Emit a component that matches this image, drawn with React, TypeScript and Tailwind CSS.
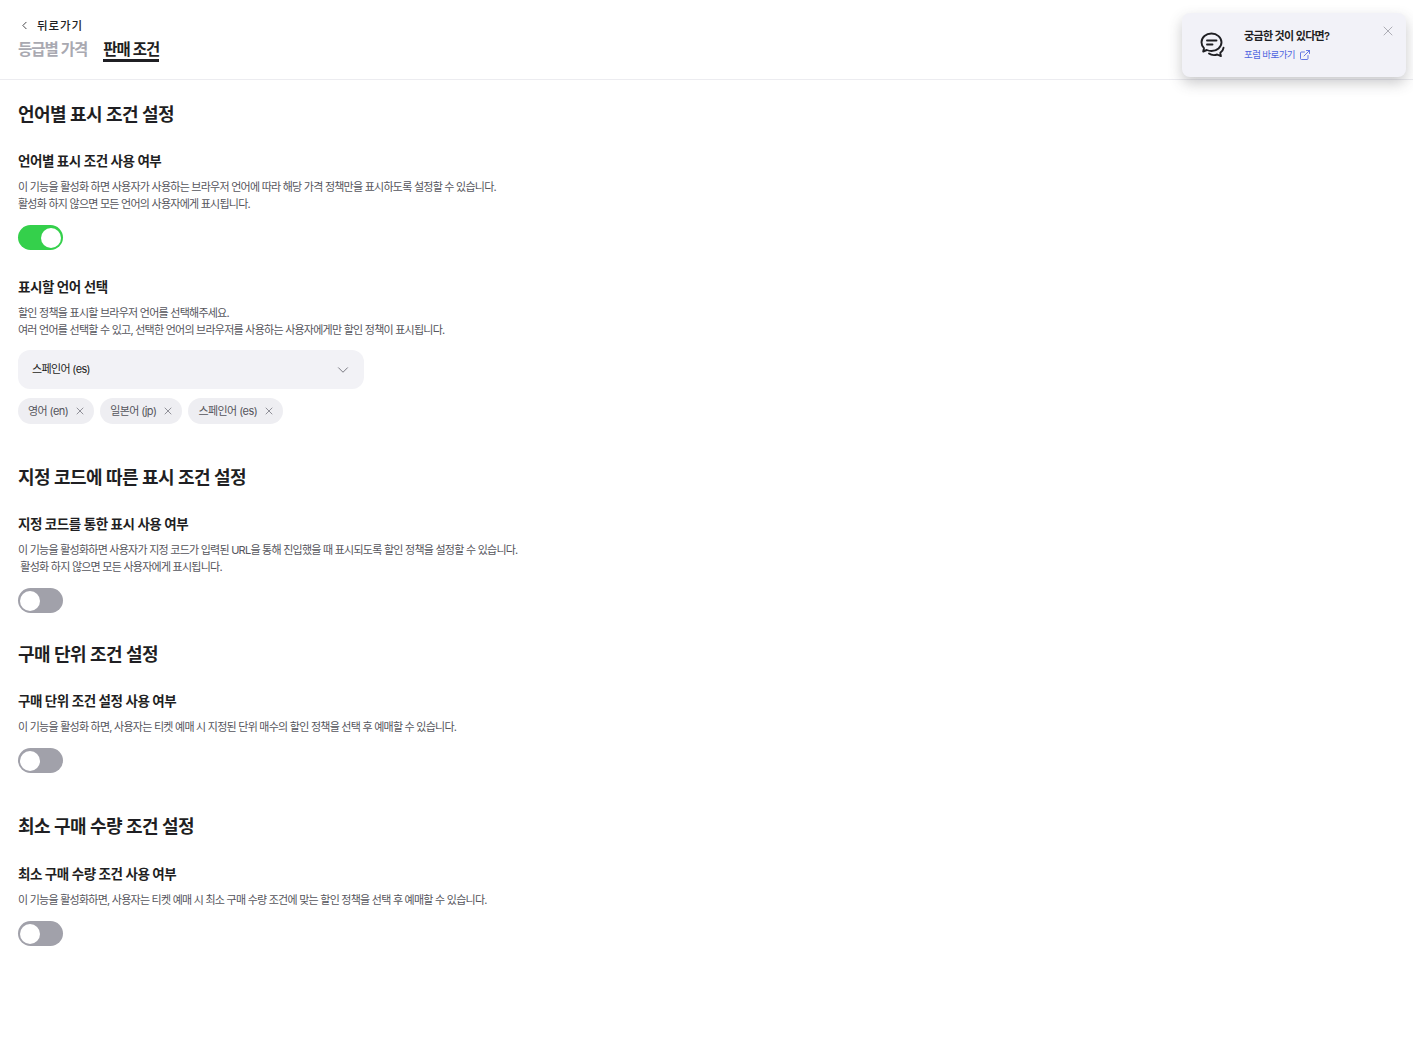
import { ChevronLeft, ChevronDown, X, ExternalLink } from 'lucide-react';

function Toggle({ on }: { on?: boolean }) {
    return (
        <div className={`flex h-[25px] w-[45px] items-center rounded-full px-[2px] ${on ? 'justify-end bg-[#34d04b]' : 'justify-start bg-[#a1a1aa]'}`}>
            <div className="h-[20px] w-[20px] rounded-full bg-white" />
        </div>
    );
}

function Tag({ label }: { label: string }) {
    return (
        <div className="flex h-[26px] items-center gap-[6px] rounded-full bg-[#eeeef2] pl-[10px] pr-[8px] text-[11px] tracking-[-0.58px] text-[#55555c]">
            {label}
            <X size={12} strokeWidth={1.5} className="text-[#70707a]" />
        </div>
    );
}

function Title({ children }: { children: string }) {
    return <h2 className="text-[18px] font-semibold leading-[28px] tracking-[-0.55px] text-[#1f1f23]">{children}</h2>;
}

function Sub({ children }: { children: string }) {
    return <h3 className="text-[13.5px] font-semibold leading-[20px] tracking-[-0.46px] text-[#1f1f23]">{children}</h3>;
}

function Desc({ lines }: { lines: string[] }) {
    return (
        <div className="mt-[8px] whitespace-pre text-[11px] leading-[17px] tracking-[-0.75px] text-[#55555c]">
            {lines.map((l) => (
                <p key={l}>{l}</p>
            ))}
        </div>
    );
}

export default function App() {
    return (
        <div className="relative min-h-[1038px] bg-white font-['Inter','Noto_Sans_CJK_KR',sans-serif]">
            <header className="h-[80px] border-b border-[#ececf0] px-[18px] pt-[17px]">
                <div className="flex h-[16px] items-center gap-[6px] text-[11.5px] font-medium tracking-[0.9px] text-[#1f1f23]">
                    <ChevronLeft size={13} strokeWidth={1.5} />
                    <span className="pt-[3px]">뒤로가기</span>
                </div>
                <div className="mt-[4px] flex gap-[16px] text-[15.5px] font-semibold leading-[26px] tracking-[-1px]">
                    <span className="h-[25px] text-[#a9a9b1]">등급별 가격</span>
                    <span className="h-[25px] border-b-[3px] border-[#1f1f23] text-[#1f1f23]">판매 조건</span>
                </div>
            </header>

            <main className="px-[18px] pt-[21px]">
                <Title>언어별 표시 조건 설정</Title>
                <div className="mt-[22px]">
                    <Sub>언어별 표시 조건 사용 여부</Sub>
                    <Desc lines={['이 기능을 활성화 하면 사용자가 사용하는 브라우저 언어에 따라 해당 가격 정책만을 표시하도록 설정할 수 있습니다.', '활성화 하지 않으면 모든 언어의 사용자에게 표시됩니다.']} />
                    <div className="mt-[12px]"><Toggle on /></div>
                </div>
                <div className="mt-[27px]">
                    <Sub>표시할 언어 선택</Sub>
                    <Desc lines={['할인 정책을 표시할 브라우저 언어를 선택해주세요.', '여러 언어를 선택할 수 있고, 선택한 언어의 브라우저를 사용하는 사용자에게만 할인 정책이 표시됩니다.']} />
                    <div className="mt-[11px] flex h-[39px] w-[346px] items-center justify-between rounded-[12px] bg-[#f2f2f6] pl-[14px] pr-[12px] text-[11px] tracking-[-0.65px] text-[#1f1f23]">
                        스페인어 (es)
                        <ChevronDown size={18} strokeWidth={1.25} className="text-[#70707a]" />
                    </div>
                    <div className="mt-[9px] flex gap-[6px]">
                        <Tag label="영어 (en)" />
                        <Tag label="일본어 (jp)" />
                        <Tag label="스페인어 (es)" />
                    </div>
                </div>

                <div className="mt-[40px]"><Title>지정 코드에 따른 표시 조건 설정</Title></div>
                <div className="mt-[22px]">
                    <Sub>지정 코드를 통한 표시 사용 여부</Sub>
                    <Desc lines={['이 기능을 활성화하면 사용자가 지정 코드가 입력된 URL을 통해 진입했을 때 표시되도록 할인 정책을 설정할 수 있습니다.', ' 활성화 하지 않으면 모든 사용자에게 표시됩니다.']} />
                    <div className="mt-[12px]"><Toggle /></div>
                </div>

                <div className="mt-[28px]"><Title>구매 단위 조건 설정</Title></div>
                <div className="mt-[22px]">
                    <Sub>구매 단위 조건 설정 사용 여부</Sub>
                    <Desc lines={['이 기능을 활성화 하면, 사용자는 티켓 예매 시 지정된 단위 매수의 할인 정책을 선택 후 예매할 수 있습니다.']} />
                    <div className="mt-[12px]"><Toggle /></div>
                </div>

                <div className="mt-[40px]"><Title>최소 구매 수량 조건 설정</Title></div>
                <div className="mt-[23px]">
                    <Sub>최소 구매 수량 조건 사용 여부</Sub>
                    <Desc lines={['이 기능을 활성화하면, 사용자는 티켓 예매 시 최소 구매 수량 조건에 맞는 할인 정책을 선택 후 예매할 수 있습니다.']} />
                    <div className="mt-[12px]"><Toggle /></div>
                </div>
            </main>

            <div className="absolute left-[1182px] top-[13px] flex h-[64px] w-[224px] items-center rounded-[8px] bg-[#f2f2f8] pl-[18px] shadow-[0_6px_14px_rgba(60,60,70,0.28)]">
                <svg width="26" height="26" viewBox="0 0 26 26" fill="none" stroke="#1f1f23" strokeWidth="1.9" strokeLinecap="round" strokeLinejoin="round">
                    <path d="M11.500 1.500c-5.500 0-10 3.800-10 8.800 0 2.300.9 4.300 2.500 5.800l-.8 3.400 3.600-1.500c1.400.6 3 1 4.700 1 5.500 0 10-4 10-8.700s-4.500-8.800-10-8.800z" />
                    <path d="M7 8.500h9.500M7 12.500h5.500" />
                    <path d="M9 21.500c1.300 1 3 1.600 4.900 1.600 1.100 0 2.300-.2 3.300-.6l3.700 1.600-.6-3.300c1.700-1.200 2.900-3 3.200-5" />
                </svg>
                <div className="ml-[18px]">
                    <div className="-mt-[1px] text-[11px] font-semibold leading-[18px] tracking-[-0.64px] text-[#1f1f23]">궁금한 것이 있다면?</div>
                    <div className="mt-[3px] flex items-center gap-[4px] text-[9.5px] leading-[14px] tracking-[-0.6px] text-[#4f65e0]">
                        포럼 바로가기
                        <ExternalLink size={12} strokeWidth={1.75} />
                    </div>
                </div>
                <X size={16} strokeWidth={1} className="absolute right-[10px] top-[10px] text-[#8a8a92]" />
            </div>
        </div>
    );
}
